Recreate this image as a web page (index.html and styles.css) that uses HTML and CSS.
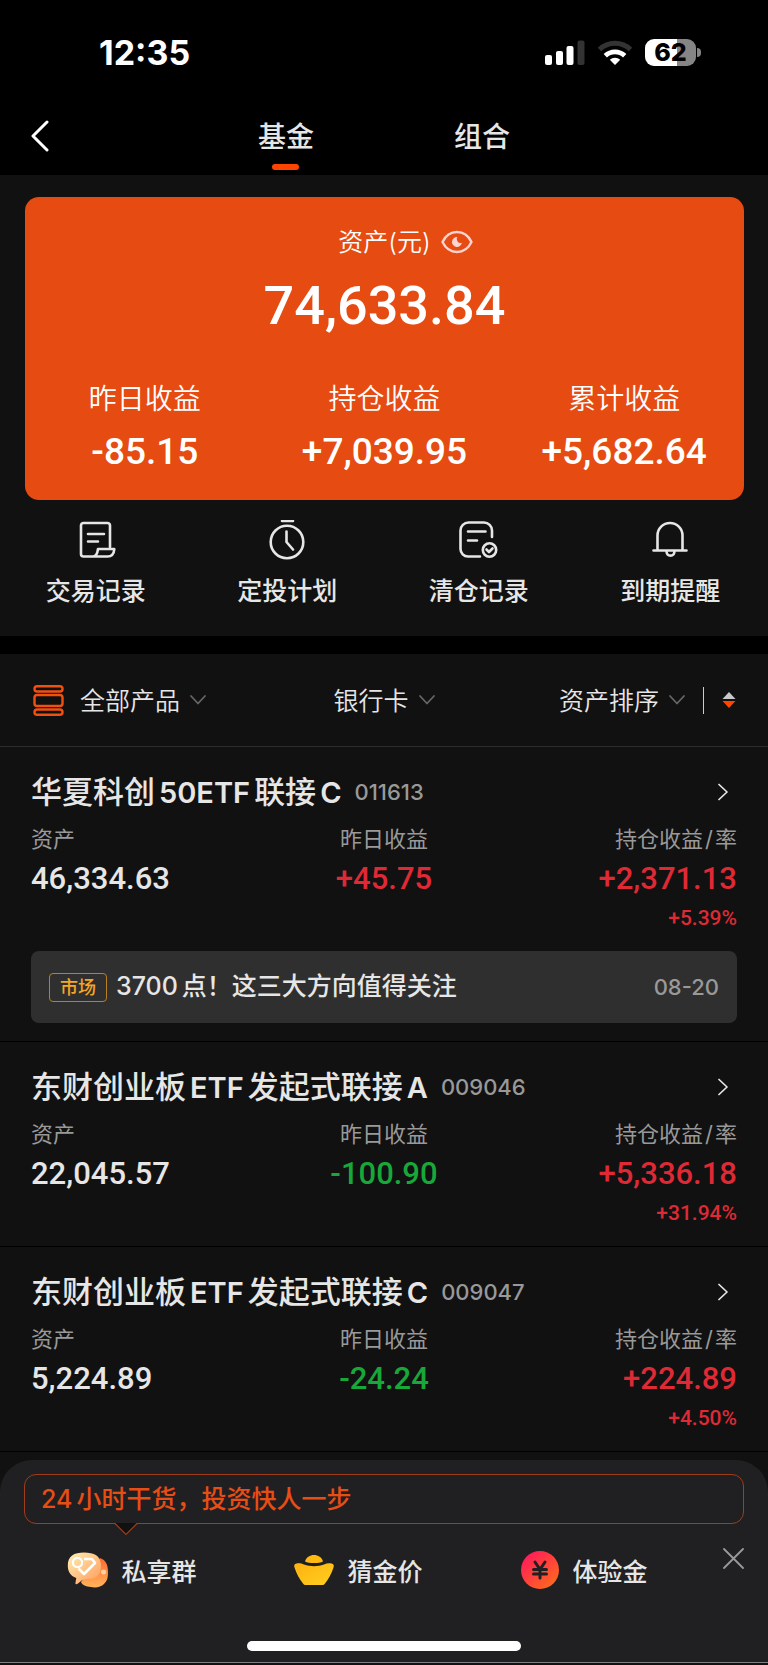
FILE: index.html
```html
<!DOCTYPE html>
<html lang="zh-CN">
<head>
<meta charset="utf-8">
<meta name="viewport" content="width=device-width, initial-scale=1">
<title>基金资产</title>
<link rel="stylesheet" href="styles.css">
</head>
<body>
<svg class="sprite" aria-hidden="true">
  <symbol id="chevron-down" viewBox="0 0 18 12"><path d="M2 2l7 7.500 7-7.500" fill="none" stroke="currentColor" stroke-width="1.800" stroke-linecap="round" stroke-linejoin="round"/></symbol>
  <symbol id="chevron-right" viewBox="0 0 10 18"><path d="M1 1.500L9 9l-8 7.500" fill="none" stroke="currentColor" stroke-width="1.700" stroke-linecap="round" stroke-linejoin="round"/></symbol>
</svg>

<header class="top">
  <div class="status">
    <time class="clock">12:35</time>
    <div class="status-icons">
      <svg width="40" height="26" viewBox="0 0 40 26" fill="#fff" aria-label="信号">
        <rect x="0" y="15" width="7" height="10" rx="2"/>
        <rect x="11" y="11" width="7" height="14" rx="2"/>
        <rect x="21.500" y="6" width="7" height="19" rx="2"/>
        <rect x="32.500" y="0.500" width="7" height="24.500" rx="2" fill="#333"/>
      </svg>
      <svg width="36" height="27" viewBox="0 0 36 27" fill="none" aria-label="无线网络">
        <path d="M2.500 10.500a22.500 22.500 0 0 1 31 0" stroke="#333" stroke-width="5"/>
        <path d="M8.300 16.700a14 14 0 0 1 19.400 0" stroke="#fff" stroke-width="4.800"/>
        <path d="M18 26l-5.200-5.300a7.600 7.600 0 0 1 10.400 0z" fill="#fff"/>
      </svg>
      <div class="battery"><span class="battery-body">62</span><span class="battery-tip"></span></div>
    </div>
  </div>
  <nav class="nav">
    <button class="back" type="button" aria-label="返回">
      <svg width="18" height="32" viewBox="0 0 18 32"><path d="M16 2L2 16l14 14" fill="none" stroke="#fff" stroke-width="3" stroke-linecap="round" stroke-linejoin="round"/></svg>
    </button>
    <div class="tabs">
      <a class="tab tab-active" href="#fund">基金</a>
      <a class="tab" href="#portfolio">组合</a>
    </div>
  </nav>
</header>

<main class="main">
  <section class="summary">
    <div class="asset">
      <span class="asset-label">资产(元)</span>
      <button class="eye" type="button" aria-label="隐藏金额">
        <svg width="32" height="24" viewBox="0 0 32 24"><path d="M1.500 12C8-1.300 24-1.300 30.500 12 24 25.300 8 25.300 1.500 12z" fill="none" stroke="#ffd3cf" stroke-width="2.400" stroke-linejoin="round"/><path d="M16.300 7a5 5 0 1 0 4.600 5.800 3.900 3.900 0 0 1-4.600-5.800z" fill="#ffd3cf"/></svg>
      </button>
    </div>
    <p class="total">74,633.84</p>
    <dl class="gains">
      <div><dt>昨日收益</dt><dd>-85.15</dd></div>
      <div><dt>持仓收益</dt><dd>+7,039.95</dd></div>
      <div><dt>累计收益</dt><dd>+5,682.64</dd></div>
    </dl>
  </section>

  <nav class="actions">
    <a class="action" href="#records">
      <svg width="40" height="40" viewBox="0 0 40 40"><path d="M34 27V5.500a2.500 2.500 0 0 0-2.500-2.500H7.500a2.500 2.500 0 0 0-2.500 2.500v28.500A2.500 2.500 0 0 0 7.500 36.500H31.500c4 0 6.500-3 6.800-7.500H22c-.5 4-1.500 7.500-5 7.500M12 14h16M12 21.500h10"/></svg>
      交易记录
    </a>
    <a class="action" href="#plan">
      <svg width="40" height="40" viewBox="0 0 40 40"><circle cx="20" cy="22" r="16.300"/><path d="M15 1h11M19.500 11.500V22l6.500 7.500"/></svg>
      定投计划
    </a>
    <a class="action" href="#cleared">
      <svg width="40" height="40" viewBox="0 0 40 40"><path d="M33 17V10.500a8 8 0 0 0-8-8H9.500a8 8 0 0 0-8 8v18.500a7.500 7.500 0 0 0 7.500 7.500H21M9 11.500h17.500M9 20.500h9"/><circle cx="30.500" cy="30" r="6.700"/><path d="M27.500 29.500l2.500 2.500 3.500-3.500"/></svg>
      清仓记录
    </a>
    <a class="action" href="#reminder">
      <svg width="40" height="40" viewBox="0 0 40 40"><path d="M7.500 30V15.500a12.500 12.500 0 0 1 25 0V30M3.500 30.500h33M16.500 31.500c.5 5.500 7.500 5.500 8 0"/></svg>
      到期提醒
    </a>
  </nav>

  <form class="filters">
    <label class="filter">
      <svg class="stack" width="31" height="31" viewBox="0 0 31 31" fill="none" stroke="#f2500f" stroke-width="2.400"><rect x="1.500" y="1.200" width="28" height="5.300" rx="2.600"/><rect x="1.500" y="10" width="28" height="11" rx="2.600"/><rect x="1.500" y="24.500" width="28" height="5.300" rx="2.600"/></svg>
      <select aria-label="产品"><option>全部产品</option></select>
      <svg class="caret" width="18" height="12"><use href="#chevron-down"/></svg>
    </label>
    <label class="filter">
      <select aria-label="银行卡"><option>银行卡</option></select>
      <svg class="caret" width="18" height="12"><use href="#chevron-down"/></svg>
    </label>
    <div class="sorting">
      <label class="filter">
        <select aria-label="排序"><option>资产排序</option></select>
        <svg class="caret" width="18" height="12"><use href="#chevron-down"/></svg>
      </label>
      <span class="bar"></span>
      <button class="order" type="button" aria-label="切换升降序">
        <svg width="14" height="18" viewBox="0 0 14 18"><path d="M7 1l6.500 7H.5z" fill="#c8c8c8"/><path d="M7 17l6.500-7H.5z" fill="#ff4400"/></svg>
      </button>
    </div>
  </form>

  <article class="fund">
    <a class="fund-head" href="#011613">
      <h2>华夏科创<span class="latin">50ETF</span>联接<span class="latin">C</span></h2>
      <span class="code">011613</span>
      <svg class="go" width="10" height="18"><use href="#chevron-right"/></svg>
    </a>
    <dl class="stats">
      <div><dt>资产</dt><dd>46,334.63</dd></div>
      <div><dt>昨日收益</dt><dd class="up">+45.75</dd></div>
      <div><dt>持仓收益<span class="slash">/</span>率</dt><dd class="up">+2,371.13</dd><dd class="rate up">+5.39%</dd></div>
    </dl>
    <a class="news" href="#news">
      <span class="tag">市场</span>
      <span class="news-title">3700<span class="after-latin">点！这三大方向值得关注</span></span>
      <time class="date">08-20</time>
    </a>
  </article>

  <article class="fund">
    <a class="fund-head" href="#009046">
      <h2>东财创业板<span class="latin">ETF</span>发起式联接<span class="latin">A</span></h2>
      <span class="code">009046</span>
      <svg class="go" width="10" height="18"><use href="#chevron-right"/></svg>
    </a>
    <dl class="stats">
      <div><dt>资产</dt><dd>22,045.57</dd></div>
      <div><dt>昨日收益</dt><dd class="down">-100.90</dd></div>
      <div><dt>持仓收益<span class="slash">/</span>率</dt><dd class="up">+5,336.18</dd><dd class="rate up">+31.94%</dd></div>
    </dl>
  </article>

  <article class="fund">
    <a class="fund-head" href="#009047">
      <h2>东财创业板<span class="latin">ETF</span>发起式联接<span class="latin">C</span></h2>
      <span class="code">009047</span>
      <svg class="go" width="10" height="18"><use href="#chevron-right"/></svg>
    </a>
    <dl class="stats">
      <div><dt>资产</dt><dd>5,224.89</dd></div>
      <div><dt>昨日收益</dt><dd class="down">-24.24</dd></div>
      <div><dt>持仓收益<span class="slash">/</span>率</dt><dd class="up">+224.89</dd><dd class="rate up">+4.50%</dd></div>
    </dl>
  </article>
</main>

<footer class="sheet">
  <p class="tip">24<span class="after-latin">小时干货，投资快人一步</span>
    <svg class="tip-arrow" width="24" height="13" viewBox="0 0 24 13"><path d="M1 0l11 11.500L23 0z" fill="#111"/><path d="M1 .5l11 11L23 .5" fill="none" stroke="#a03c18" stroke-width="1.200"/></svg>
  </p>
  <div class="sheet-row">
    <nav class="promos">
      <a class="promo" href="#group">
        <svg width="42" height="38" viewBox="0 0 42 38">
          <defs>
            <linearGradient id="chat-front" x1="0" y1="0" x2="1" y2="1"><stop offset="0" stop-color="#fff0b0"/><stop offset="1" stop-color="#ff9a5c"/></linearGradient>
            <linearGradient id="chat-back" x1="0" y1="0" x2="0" y2="1"><stop offset="0" stop-color="#ff6a30"/><stop offset="1" stop-color="#ffb45c"/></linearGradient>
          </defs>
          <path d="M33 7c6 2 8 7 8 14 0 6-1 9-4 12-3 3-8 4-13 3-5-.5-9-2-10-5z" fill="url(#chat-back)"/>
          <path d="M17 1.500c10 0 17 3 17 13.500S28 28 19 28c-3 0-5 2-8 4.500-1.500 1-3 1-2.500-1l.8-4.500C3 25 .8 20 .8 14.500.8 5 7 1.500 17 1.500z" fill="url(#chat-front)"/>
          <circle cx="36.500" cy="21" r="2.500" fill="#ffd0a0"/>
          <circle cx="10.500" cy="11.500" r="4.600" fill="none" stroke="#fff" stroke-width="2.200"/>
          <path d="M17 8h8l3 4-11 11-5.500-5.500" fill="none" stroke="#fff" stroke-width="2.600" stroke-linejoin="round"/>
        </svg>
        私享群
      </a>
      <a class="promo" href="#gold">
        <svg width="42" height="38" viewBox="0 0 42 38">
          <defs><linearGradient id="ingot" x1="0" y1="0" x2="1" y2="1"><stop offset="0" stop-color="#ffb20f"/><stop offset="1" stop-color="#ffcf20"/></linearGradient></defs>
          <path d="M12 10.500C14 1.800 28 1.800 30 10.500c-4 2-14 2-18 0z" fill="#ffb910"/>
          <path d="M3.500 12.500c3-.5 5 0 7.500 1 6 2.200 14 2.200 20 0 2.500-1 4.500-1.500 7.500-1 2 .3 2.800 2 2 4-2 6.500-5 11.500-8.500 16-.8 1-1.600 1.500-3 1.500H13c-1.400 0-2.200-.5-3-1.500-3.500-4.500-6.500-9.500-8.500-16-.8-2 0-3.700 2-4z" fill="url(#ingot)"/>
        </svg>
        猜金价
      </a>
      <a class="promo" href="#trial">
        <svg width="40" height="40" viewBox="0 0 40 40">
          <defs><linearGradient id="coin" x1="0.100" y1="0.200" x2="0.800" y2="1"><stop offset="0" stop-color="#ff2056"/><stop offset="1" stop-color="#ff6a1c"/></linearGradient></defs>
          <circle cx="20" cy="20" r="19" fill="url(#coin)"/>
          <path d="M15 12l5 7.500 5-7.500M20 19.500V28M13.500 19.500h13M13.500 24h13" fill="none" stroke="#202023" stroke-width="3" stroke-linecap="round" stroke-linejoin="round"/>
        </svg>
        体验金
      </a>
    </nav>
    <button class="close" type="button" aria-label="关闭">
      <svg width="21" height="21" viewBox="0 0 21 21"><path d="M1 1l19 19M20 1L1 20" stroke="#999" stroke-width="1.800" stroke-linecap="round"/></svg>
    </button>
  </div>
  <div class="home"></div>
</footer>
</body>
</html>
```
FILE: styles.css
```css
* { box-sizing: border-box; }

body {
  margin: 0;
  background: #111;
  color: #e6e6e6;
  font-family: Inter, "Noto Sans CJK SC", sans-serif;
  font-size: 25px;
}

a { color: inherit; text-decoration: none; }
button { padding: 0; border: 0; background: none; color: inherit; font: inherit; }
p, h2, dl, dd { margin: 0; }
svg { display: block; flex: none; }
.sprite { position: absolute; width: 0; height: 0; }

/* Status bar and navigation */
.top { background: #000; }

.status {
  display: flex;
  align-items: center;
  justify-content: space-between;
  height: 105px;
  padding: 0 67px 0 99px;
}

.clock { font-size: 34px; font-weight: 700; color: #fff; }
.status-icons { display: flex; align-items: center; gap: 12px; }
.battery { display: flex; align-items: center; gap: 1px; }

.battery-body {
  width: 51px;
  border-radius: 9px;
  background: linear-gradient(90deg, #fff 62%, #858585 62%);
  color: #000;
  font-size: 25px;
  font-weight: 800;
  line-height: 27px;
  text-align: center;
}

.battery-tip { width: 4px; height: 9px; border-radius: 0 4px 4px 0; background: #858585; }

.nav {
  display: grid;
  grid-template-columns: 1fr auto 1fr;
  height: 70px;
  padding: 0 31px;
}

.back { justify-self: start; align-self: start; margin-top: 15px; }
.tabs { display: flex; gap: 140px; }

.tab {
  display: flex;
  flex-direction: column;
  align-items: center;
  padding-top: 12px;
  font-size: 28px;
  font-weight: 500;
  line-height: 40px;
}

.tab-active::after {
  content: "";
  width: 27px;
  height: 6px;
  margin-top: 7px;
  border-radius: 3px;
  background: #ff4400;
}

/* Asset summary */
.main { padding-bottom: 8px; }

.summary {
  margin: 22px 24px 0 25px;
  padding: 29px 0 26px;
  border-radius: 14px;
  background: #e64b12;
  color: #fff;
  text-align: center;
}

.asset {
  display: grid;
  grid-template-columns: 1fr auto 1fr;
  align-items: center;
  gap: 10px;
  line-height: 32px;
}

.asset-label { grid-column: 2; font-size: 25px; font-weight: 350; }
.eye { justify-self: start; }

.total {
  margin-top: 16px;
  font-family: Roboto, sans-serif;
  font-size: 54px;
  font-weight: 500;
  line-height: 64px;
}

.gains { display: grid; grid-template-columns: repeat(3, 1fr); margin-top: 43px; }
.gains dt { font-size: 28px; font-weight: 350; line-height: 36px; }

.gains dd {
  margin-top: 13px;
  font-family: Roboto, sans-serif;
  font-size: 37px;
  font-weight: 500;
  line-height: 44px;
}

/* Shortcuts */
.actions {
  display: grid;
  grid-template-columns: repeat(4, 1fr);
  padding: 20px 2px 28px 0;
  border-bottom: 18px solid #000;
}

.action {
  display: flex;
  flex-direction: column;
  align-items: center;
  gap: 14px;
  font-weight: 500;
  line-height: 34px;
}

.action svg {
  fill: none;
  stroke: #e6e6e6;
  stroke-width: 2.6px;
  stroke-linecap: round;
  stroke-linejoin: round;
}

/* Filters */
.filters {
  display: grid;
  grid-template-columns: 1fr auto 1fr;
  align-items: center;
  height: 93px;
  padding: 0 32px 0 33px;
  border-bottom: 1px solid #2c2c2c;
}

.filter { display: flex; align-items: center; gap: 8px; }
.stack { margin-right: 8px; }

.filter select {
  appearance: none;
  padding: 2px 0 0;
  border: 0;
  background: none;
  color: #e6e6e6;
  font: 350 25px/36px Inter, "Noto Sans CJK SC", sans-serif;
}

.caret { color: #666; }
.sorting { display: flex; align-items: center; justify-self: end; }
.bar { width: 1px; height: 27px; margin: 0 18px 0 17px; background: #ccc; }

/* Holdings */
.fund { padding: 26px 31px 18px; border-bottom: 1px solid #000; }
.fund-head { display: flex; align-items: center; height: 38px; }
.fund-head h2 { font-size: 31px; font-weight: 500; line-height: 38px; }
.latin { margin: 0 4px; font-size: 29px; font-weight: 600; line-height: 1; }
.code { margin-left: 9px; color: #999; font-size: 22px; font-weight: 500; }
.after-latin { margin-left: 4px; }
.go { margin: 0 9px 0 auto; }

.stats { display: grid; grid-template-columns: repeat(3, 1fr); margin: 13px 0 1px; }
.stats div:nth-child(2) { text-align: center; }
.stats div:nth-child(3) { text-align: right; }
.stats dt { color: #999; font-size: 22px; line-height: 30px; }
.slash { margin: 0 2px; }

.stats dd {
  margin-top: 5px;
  font-family: Roboto, sans-serif;
  font-size: 31px;
  font-weight: 500;
  line-height: 40px;
}

.stats .rate { font-size: 21px; line-height: 28px; }
.up { color: #df2935; }
.down { color: #18a83a; }

.news {
  display: flex;
  align-items: center;
  gap: 9px;
  height: 72px;
  margin-top: 19px;
  padding: 0 18px;
  border-radius: 8px;
  background: #2f2f2f;
}

.tag {
  padding: 1px 10px 0;
  border: 1px solid #b98022;
  border-radius: 4px;
  color: #f6a623;
  font-size: 18px;
  font-weight: 500;
  line-height: 26px;
}

.news-title { font-weight: 500; line-height: 36px; padding-bottom: 2px; }
.date { margin-left: auto; color: #999; font-size: 22px; font-weight: 500; }

/* Bottom sheet */
.sheet {
  padding: 14px 24px 11px;
  border-bottom: 1px solid #808083;
  border-radius: 32px 32px 0 0;
  background: #202023;
}

.tip {
  position: relative;
  padding: 0 16px;
  border: 1px solid #a03c18;
  border-radius: 12px;
  color: #e84d14;
  font-weight: 500;
  line-height: 48px;
}

.tip-arrow { position: absolute; top: 100%; left: 89px; }
.sheet-row { display: flex; align-items: flex-start; gap: 26px; margin: 24px 0 0 -5px; }
.promos { display: grid; flex: 1; grid-template-columns: repeat(3, 1fr); }

.promo {
  display: flex;
  align-items: center;
  justify-content: center;
  gap: 12px;
  height: 44px;
  font-weight: 500;
}

.home {
  width: 38%;
  height: 10px;
  margin: 49px auto 0;
  border-radius: 5px;
  background: #fff;
}
```
